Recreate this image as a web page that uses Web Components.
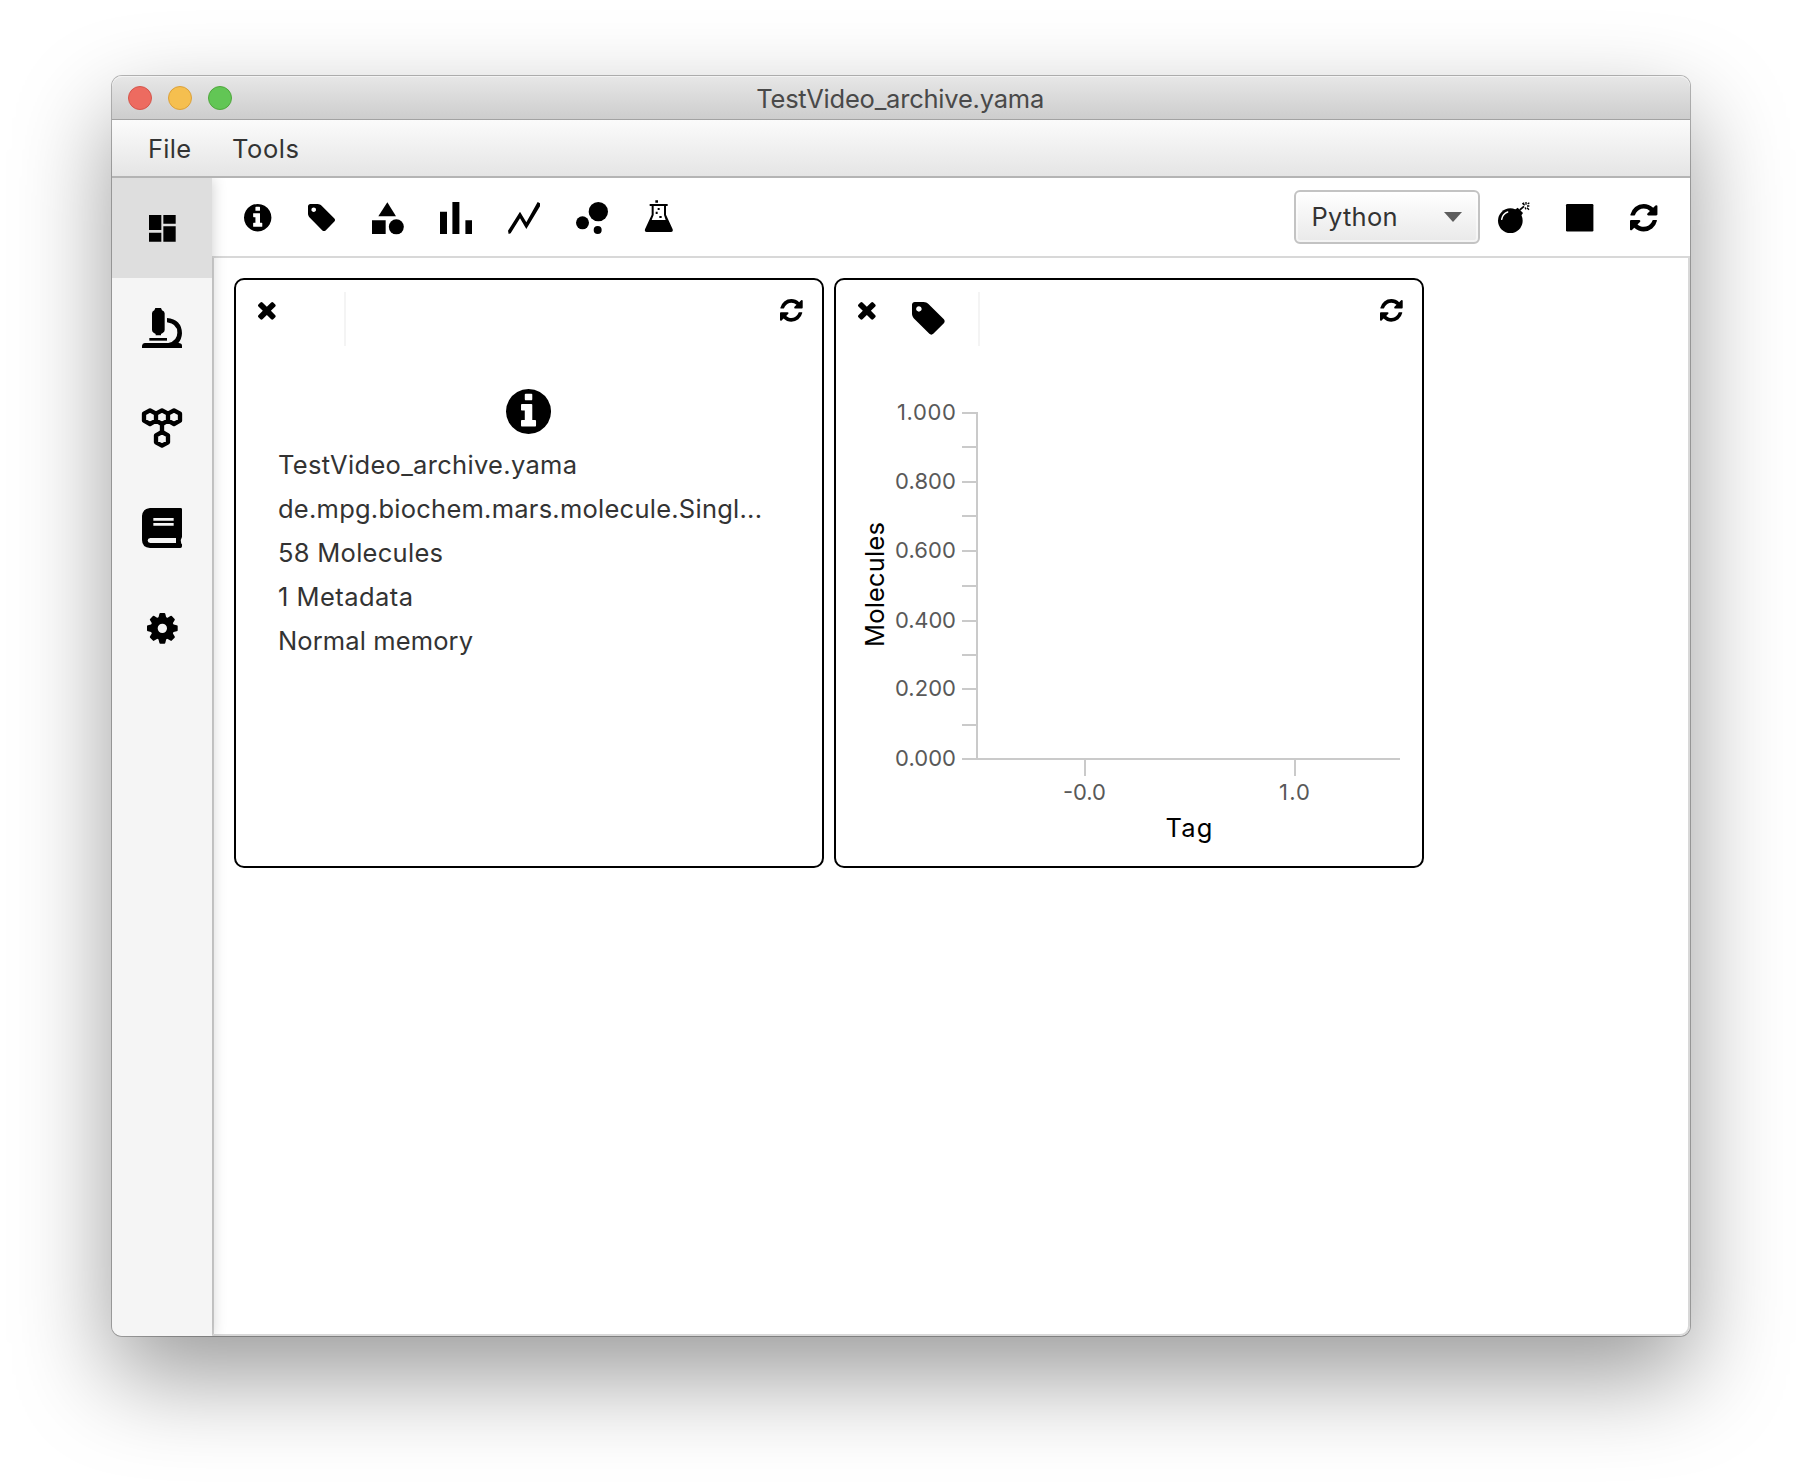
<!DOCTYPE html>
<html lang="en">
<head>
<meta charset="utf-8">
<title>TestVideo_archive.yama</title>
<style>
  body { margin: 0; background: #fff; font-family: Inter, "Liberation Sans", sans-serif; overflow: hidden; width: 1802px; height: 1484px; }
</style>
</head>
<body>
<mars-window></mars-window>
<script>
const ICONS = {
  info: ["128 128 1568 1568", '<path d="M1152 1376v-160q0-14-9-23t-23-9h-96v-512q0-14-9-23t-23-9h-320q-14 0-23 9t-9 23v160q0 14 9 23t23 9h96v320h-96q-14 0-23 9t-9 23v160q0 14 9 23t23 9h448q14 0 23-9t9-23zM1024 480v-160q0-14-9-23t-23-9h-192q-14 0-23 9t-9 23v160q0 14 9 23t23 9h192q14 0 23-9t9-23zM1664 896q0 209-103 385.5t-279.5 279.5-385.5 103-385.5-103-279.5-279.5-103-385.5 103-385.5 279.5-279.5 385.5-103 385.5 103 279.5 279.5 103 385.5z"/>'],
  tag: ["128 128 1568 1568", '<path d="M576 448q0-53-37.5-90.5t-90.5-37.5-90.5 37.5-37.5 90.5 37.5 90.5 90.5 37.5 90.5-37.5 37.5-90.5zM1643 1024q0 53-37 90l-491 492q-39 37-91 37-53 0-90-37l-715-716q-38-37-64.5-101t-26.5-117v-416q0-52 38-90t90-38h416q53 0 117 26.5t102 64.5l715 714q37 39 37 91z"/>'],
  refresh: ["128 128 1568 1568", '<path d="M1639 1056q0 5-1 7-64 268-268 434.5t-478 166.5q-146 0-282.5-55t-243.5-157l-129 129q-19 19-45 19t-45-19-19-45v-448q0-26 19-45t45-19h448q26 0 45 19t19 45-19 45l-137 137q71 66 161 102t187 36q134 0 250-65t186-179q11-17 53-117 8-23 30-23h192q13 0 22.5 9.5t9.5 22.5zM1664 256v448q0 26-19 45t-45 19h-448q-26 0-45-19t-19-45 19-45l138-138q-148-137-349-137-134 0-250 65t-186 179q-11 17-53 117-8 23-30 23h-199q-13 0-22.5-9.5t-9.5-22.5v-7q65-268 270-434.5t480-166.5q146 0 284 55.5t245 156.5l130-129q19-19 45-19t45 19 19 45z"/>'],
  close: ["302 366 1188 1188", '<path d="M1490 1322q0 40-28 68l-136 136q-28 28-68 28t-68-28l-294-294-294 294q-28 28-68 28t-68-28l-136-136q-28-28-28-68t28-68l294-294-294-294q-28-28-28-68t28-68l136-136q28-28 68-28t68 28l294 294 294-294q28-28 68-28t68 28l136 136q28 28 28 68t-28 68l-294 294 294 294q28 28 28 68z"/>'],
  shapes: ["0 0 96 96", '<path d="M46 1L72 43H19z"/><path d="M0 55h41v41H0z"/><circle cx="73" cy="74.500" r="22.500"/>'],
  bars: ["0 0 32 32", '<path d="M0 9.700h7V32H0zM12.400 0h7v32h-7zM25.400 18.300h6.600V32h-6.600z"/>'],
  line: ["0 0 96 96", '<path d="M0 86L36 29 55 61 89 0 96 4V13L55 81 36 49 8 94 2 96z"/>'],
  bubbles: ["0 0 96 96", '<circle cx="67" cy="29" r="29"/><circle cx="19.500" cy="62.500" r="19.500"/><circle cx="65" cy="84" r="12"/>'],
  flask: ["0 0 84 96", '<path d="M34-5h8v7h-8z"/><path d="M17 6h54v6h-5v26l20 44q2 8-5 8H8q-7 0-5-8L23 38V12h-6zM29 12v27l-6 15h42l-5-15V12z" fill-rule="evenodd"/><path d="M41 18h6v6h-6zM35 29h6v7h-6zM46 42h7v6h-7z"/>'],
  bomb: ["0 0 96 96", '<circle cx="37" cy="56" r="37"/><path d="M50 24l9-7 16 16-8 11z"/><path d="M65 24l13-11" fill="none" stroke="#000" stroke-width="5"/><path d="M75 7l3-5M84 0v8M89 6l5-4M87 12h7M87 17l6 6M82 16l1 6M73 4l7 6" fill="none" stroke="#000" stroke-width="4"/><path d="M11 52Q14 35 29 30" fill="none" stroke="#fff" stroke-width="4.500" stroke-linecap="round"/>'],
  stop: ["0 0 28 28", '<rect width="27.400" height="27.400" rx="1.200"/>'],
  dashboard: ["0 0 80 80", '<path d="M0 0h37v45H0zM0 53h37v27H0zM43 0h37v26H43zM43 34h37v46H43z"/>'],
  microscope: ["0 0 120 120", '<path d="M40 0h17l3 7q8 3 8 9v50q0 6-6 9l-5 3v4H41v-4l-5-3q-6-3-6-9V16q0-6 7-9z"/><path d="M22 90h53v8H22z"/><path d="M75 30Q119 34 120 76q-1 18-11 29 11 1 11 8v7H0v-7q1-7 8-8h71q27-7 27-31 0-27-31-31z"/>'],
  cells: ["0 0 120 120", '<g fill="none" stroke="#000" stroke-width="13" stroke-linejoin="round"><path d="M24 7l18 10v21L24 48 6 38V17zM60 7l18 10v21L60 48 42 38V17zM96 7l18 10v21L96 48 78 38V17zM60 72l18 10v21l-18 10-18-10V82z"/><path d="M60 48v24"/></g>'],
  book: ["0 0 120 120", '<path d="M24 0h92q4 0 4 4v83q-5 8-3 15 0 5 3 7v6q0 5-5 5H24Q0 118 0 96V24Q2 2 24 0zM34 30v8h61v-8zM34 45v8h61v-8zM25 90q-8 1-8 7.500T25 105h77V90z" fill-rule="evenodd"/>'],
  gear: ["-46 -46 92 92", (() => {
    let teeth = "";
    for (let a = 0; a < 360; a += 45) teeth += `<path d="M-12 -31L-9 -43Q-8.500 -46 -6 -46H6Q8.500 -46 9 -43L12 -31z" transform="rotate(${a})"/>`;
    return teeth + '<circle r="24.500" fill="none" stroke="#000" stroke-width="21"/>';
  })()]
};

const define = (name, html, setup) => {
  const template = document.createElement("template");
  template.innerHTML = html;
  customElements.define(name, class extends HTMLElement {
    connectedCallback() {
      if (this.shadowRoot) return;
      this.attachShadow({ mode: "open" }).append(template.content.cloneNode(true));
      if (setup) setup(this, this.shadowRoot);
    }
  });
};

define("ui-icon", `<style>:host{display:block;flex:none}svg{display:block;overflow:visible}</style><svg></svg>`, (el, root) => {
  const [box, shape] = ICONS[el.getAttribute("name")];
  const svg = root.querySelector("svg");
  svg.setAttribute("viewBox", box);
  svg.setAttribute("width", el.getAttribute("w"));
  svg.setAttribute("height", el.getAttribute("h") || el.getAttribute("w"));
  svg.innerHTML = shape;
});

/* A single-line label whose tracking is adjusted to a given run width. */
define("ui-label", `<style>:host{display:block;width:max-content;white-space:nowrap}span{display:inline-block}</style><span><slot></slot></span>`, (el, root) => {
  const span = root.querySelector("span");
  const natural = span.getBoundingClientRect().width;
  const space = (Number(el.getAttribute("run")) - natural) / (el.textContent.length - 1);
  span.style.letterSpacing = space.toFixed(3) + "px";
  span.style.marginRight = (-space).toFixed(3) + "px";
});

define("title-bar", `<style>
  :host{display:grid;grid-template-columns:1fr auto 1fr;align-items:center;height:43px;padding:0 16px;border-bottom:1px solid #a2a2a2;background:linear-gradient(#e7e7e7,#cdcdcd);box-shadow:inset 0 1px #f3f3f3;color:#494949;font-size:25.500px}
  div{display:flex;gap:16px;padding-top:1px}
  ui-label{padding:2px 1.500px 0 0}
  i{width:22px;height:22px;border-radius:50%;border:1px solid}
  i:nth-child(1){background:#ed6b60;border-color:#d5564c}
  i:nth-child(2){background:#f5bf4f;border-color:#dca13a}
  i:nth-child(3){background:#62c655;border-color:#50a73d}
  </style><div><i></i><i></i><i></i></div><ui-label run="288">TestVideo_archive.yama</ui-label>`);

define("menu-bar", `<style>
  :host{display:flex;align-items:center;gap:41px;height:56px;padding-left:36px;border-bottom:2px solid #b4b4b4;background:linear-gradient(#fbfbfb,#e5e5e5);color:#333;font-size:25.500px}
  </style><ui-label run="43">File</ui-label><ui-label run="67">Tools</ui-label>`);

define("side-bar", `<style>
  :host{display:flex;flex-direction:column;width:100px;background:#f5f5f5;box-shadow:0 0 14px rgba(0,0,0,.2);position:relative;z-index:1;clip-path:inset(0 -20px 0 0)}
  div{height:100px;display:grid;place-items:center}
  .on{background:#dedede}
  .on ui-icon{margin-top:1px}
  </style>
  <div class="on"><ui-icon name="dashboard" w="26.700"></ui-icon></div>
  <div><ui-icon name="microscope" w="40"></ui-icon></div>
  <div><ui-icon name="cells" w="40"></ui-icon></div>
  <div><ui-icon name="book" w="40"></ui-icon></div>
  <div><ui-icon name="gear" w="30.700"></ui-icon></div>`);

define("combo-box", `<style>
  :host{display:flex;align-items:center;justify-content:space-between;box-sizing:border-box;width:186px;height:54px;padding:0 16px 0 15.500px;border:2px solid #c3c3c3;border-radius:6px;background:linear-gradient(#fff,#e9e9e9);box-shadow:inset 0 0 0 2px rgba(255,255,255,.5);color:#333;font-size:25.500px}
  slot{display:block;padding-bottom:1.500px}
  i{width:0;border:9px solid transparent;border-top:10px solid #5d5d5d;border-bottom:0;margin-top:-1px}
  </style><slot></slot><i></i>`);

define("tool-bar", `<style>
  :host{display:flex;align-items:center;height:76px;padding:2px 32px 0;border-bottom:2px solid #d8d8d8;background:#fff}
  div{display:flex;align-items:center;gap:36px}
  combo-box{margin-left:auto;margin-right:18px;margin-top:-2px}
  </style>
  <div><ui-icon name="info" w="28"></ui-icon><ui-icon name="tag" w="28"></ui-icon><ui-icon name="shapes" w="32"></ui-icon><ui-icon name="bars" w="32"></ui-icon><ui-icon name="line" w="32"></ui-icon><ui-icon name="bubbles" w="32"></ui-icon><ui-icon name="flask" w="28" h="32"></ui-icon></div>
  <combo-box><ui-label run="86">Python</ui-label></combo-box>
  <div><ui-icon name="bomb" w="32"></ui-icon><ui-icon name="stop" w="28"></ui-icon><ui-icon name="refresh" w="28"></ui-icon></div>`);

define("dash-card", `<style>
  :host{display:flex;flex-direction:column;box-sizing:border-box;width:590px;height:590px;border:2px solid #000;border-radius:10px;background:#fff}
  header{display:flex;align-items:flex-start;height:66px;padding:0 19px 0 21.600px}
  .close{margin-top:22.400px}
  .tile{box-sizing:border-box;height:54px;margin:12px auto 0 2.700px;border-right:2px solid #f4f4f4;width:var(--tile,68px);padding:10.300px 0 0 34px}
  .refresh{margin-top:19px}
  </style>
  <header><ui-icon class="close" name="close" w="17.700"></ui-icon><div class="tile"><slot name="icon"></slot></div><ui-icon class="refresh" name="refresh" w="23.200"></ui-icon></header>
  <slot></slot>`);

define("archive-info", `<style>
  :host{display:flex;flex-direction:column;padding:43.200px 42px 0;color:#333;font-size:25.500px;line-height:44px}
  ui-icon{align-self:center;margin-bottom:7.800px}
  </style>
  <ui-icon name="info" w="46"></ui-icon>
  <ui-label run="299">TestVideo_archive.yama</ui-label>
  <ui-label run="484">de.mpg.biochem.mars.molecule.Singl...</ui-label>
  <ui-label run="165">58 Molecules</ui-label>
  <ui-label run="135">1 Metadata</ui-label>
  <ui-label run="195">Normal memory</ui-label>`);

/* Plot canvas: its origin is the lower left corner of the card header. */
define("tag-chart", `<style>:host{display:block}svg{display:block}</style><svg width="586" height="520"></svg>`, (el, root) => {
  const majors = [67, 136, 205, 275, 343, 413], minors = [101, 170, 240, 309, 379];
  let out = '<g transform="translate(22 0)"><g fill="#cacaca"><rect x="118" y="66" width="2" height="346"/><rect x="104" y="412" width="438" height="2"/>';
  for (const y of [...majors, ...minors]) out += `<rect x="104" y="${y - 1}" width="15" height="2"/>`;
  out += '<rect x="226" y="414" width="2" height="16"/><rect x="436" y="414" width="2" height="16"/></g><g fill="#595959" font-size="22">';
  majors.forEach((y, i) => {
    const x = i ? 37 : 39;
    out += `<text x="${x}" y="${y + 7}" textLength="${98 - x}">${(1 - i / 5).toFixed(3)}</text>`;
  });
  out += '<text x="205" y="454" textLength="43">-0.0</text><text x="421" y="454" textLength="31">1.0</text></g>';
  out += '<g font-size="25.500"><text x="307.500" y="491" textLength="47">Tag</text><text transform="translate(26 301) rotate(-90)" textLength="125">Molecules</text></g></g>';
  root.querySelector("svg").innerHTML = out;
});

define("mars-window", `<style>
  :host{display:grid;grid-template-rows:44px 58px 1fr;width:1578px;height:1260px;margin:76px 112px;border-radius:10px;background:#fff;box-shadow:0 0 0 1px rgba(0,0,0,.27),0 40px 96px rgba(0,0,0,.4)}
  title-bar{border-radius:10px 10px 0 0}
  .body{display:grid;grid-template-columns:100px 1fr;border-radius:0 0 10px 10px;overflow:hidden}
  .main{display:grid;grid-template-rows:80px 1fr}
  .board{display:flex;align-items:flex-start;gap:10px;padding:20px;border:2px solid #d8d8d8;border-top:0;border-left-color:#d4d4d4;border-radius:0 0 10px 0}
  </style>
  <title-bar></title-bar>
  <menu-bar></menu-bar>
  <div class="body"><side-bar></side-bar>
    <div class="main"><tool-bar></tool-bar>
      <div class="board">
        <dash-card><archive-info></archive-info></dash-card>
        <dash-card style="--tile:102px"><ui-icon slot="icon" name="tag" w="33.800"></ui-icon><tag-chart></tag-chart></dash-card>
      </div>
    </div>
  </div>`);
</script>
</body>
</html>
